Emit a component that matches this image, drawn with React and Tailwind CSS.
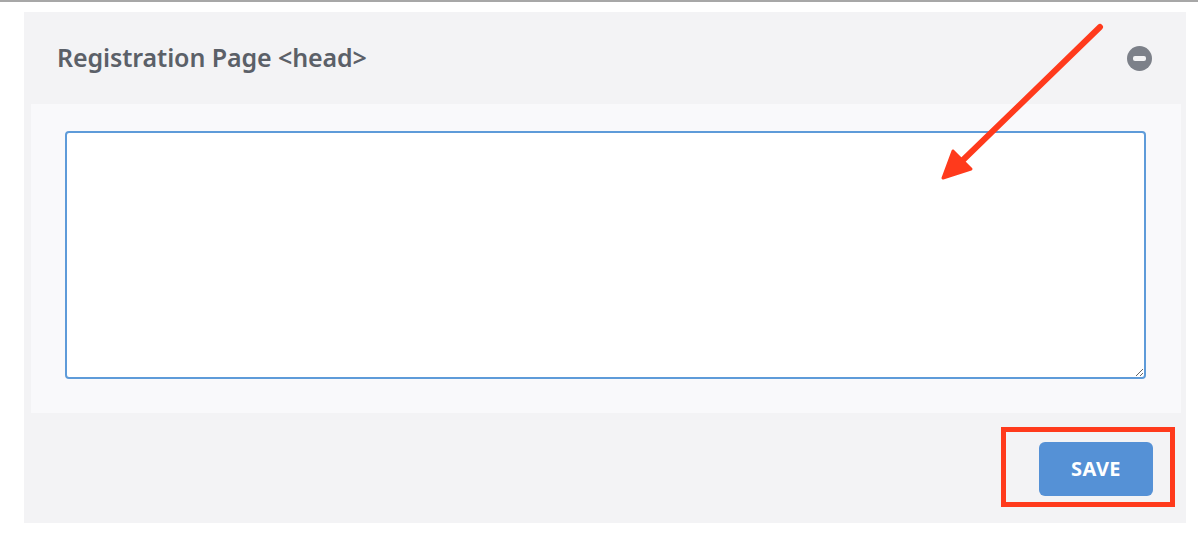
export default function App() {
  return (
    <div className="relative w-[1198px] h-[535px] bg-white overflow-hidden" style={{ fontFamily: '"Noto Sans", "Open Sans", sans-serif' }}>
      {/* top rule */}
      <div className="h-[2px] bg-[#a7a7a7]" />

      {/* Panel */}
      <div className="ml-[24px] mr-[12px] mt-[10px] h-[511px] bg-[#f3f3f5] flex flex-col">
        <div className="h-[92px] flex items-center justify-between pl-[33px] pr-[34px] shrink-0">
          <h2 className="text-[25px] leading-none font-semibold text-[#5b6068] tracking-[-0.1px] pb-[2px]">Registration Page &lt;head&gt;</h2>
          <span className="w-[25px] h-[25px] rounded-full bg-[#7c8089] flex items-center justify-center">
            <span className="w-[13px] h-[5px] rounded-[2px] bg-[#f3f3f5]" />
          </span>
        </div>

        <div className="ml-[7px] mr-[5px] h-[309px] bg-[#f9f9fb] pl-[34px] pr-[35px] pt-[27px] pb-[34px] shrink-0">
          <textarea className="block w-full h-full bg-white border-2 border-[#5e9bd9] rounded-[4px] outline-none resize" />
        </div>

        <div className="flex-1 flex items-start justify-end pr-[33px] pt-[29px]">
          <button className="w-[114px] h-[54px] bg-[#5591d6] rounded-[6px] text-white text-[20px] font-bold tracking-[0.4px]">
            SAVE
          </button>
        </div>
      </div>

      {/* annotation: red box */}
      <div className="absolute left-[1001px] top-[427px] w-[174px] h-[80px] border-[5px] border-[#ff3a1c]" />

      {/* annotation: arrow */}
      <svg className="absolute left-0 top-0 pointer-events-none" width="1198" height="535" viewBox="0 0 1198 535">
        <line x1="1100" y1="27" x2="962" y2="161" stroke="#ff3a1c" strokeWidth="6" strokeLinecap="round" />
        <polygon points="943,178 953,151 971,169" fill="#ff3a1c" stroke="#ff3a1c" strokeWidth="3" strokeLinejoin="round" />
      </svg>
    </div>
  );
}
